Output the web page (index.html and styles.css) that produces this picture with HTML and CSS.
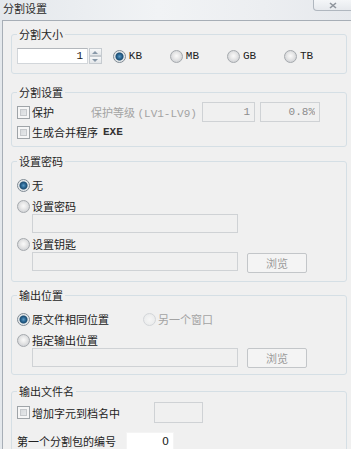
FILE: index.html
```html
<!DOCTYPE html>
<html lang="zh-CN">
<head>
    <meta charset="UTF-8">
    <meta name="viewport" content="width=device-width, initial-scale=1.0">
    <title>分割设置</title>
    <link rel="stylesheet" href="styles.css">
</head>
<body>
<div class="window">
    <div class="titlebar">
        <span class="title">分割设置</span>
        <span class="close">
            <svg width="8" height="7" viewBox="0 0 8 7"><path d="M1 1 L7 6 M7 1 L1 6" stroke="#8e949c" stroke-width="1.6" fill="none"/></svg>
        </span>
    </div>

    <div class="client">
        <!-- split size -->
        <fieldset class="group g1">
            <legend>分割大小</legend>
            <div class="row r16">
                <input type="text" class="spin-input mono" value="1">
                <span class="spin">
                    <span class="spin-btn up"></span>
                    <span class="spin-btn down"></span>
                </span>
                <label class="unit first"><input type="radio" name="unit" checked><span class="mono">KB</span></label>
                <label class="unit"><input type="radio" name="unit"><span class="mono">MB</span></label>
                <label class="unit"><input type="radio" name="unit"><span class="mono">GB</span></label>
                <label class="unit"><input type="radio" name="unit"><span class="mono">TB</span></label>
            </div>
        </fieldset>

        <!-- split options -->
        <fieldset class="group g2">
            <legend>分割设置</legend>
            <div class="row r20">
                <label class="opt protect"><input type="checkbox">保护</label>
                <span class="dim level">保护等级 <span class="mono">(LV1-LV9)</span></span>
                <input type="text" class="field mono lv" value="1" disabled>
                <input type="text" class="field mono pct" value="0.8%" disabled>
            </div>
            <div class="row r16 gap2">
                <label class="opt"><input type="checkbox">生成合并程序<span class="mono bold exe">EXE</span></label>
            </div>
        </fieldset>

        <!-- password -->
        <fieldset class="group g3">
            <legend>设置密码</legend>
            <div class="row r16">
                <label class="opt"><input type="radio" name="pw" checked>无</label>
            </div>
            <div class="row r16 gap5">
                <label class="opt"><input type="radio" name="pw">设置密码</label>
            </div>
            <div class="row indent">
                <input type="text" class="field wide" disabled>
            </div>
            <div class="row r16 gap3">
                <label class="opt"><input type="radio" name="pw">设置钥匙</label>
            </div>
            <div class="row indent top">
                <input type="text" class="field wide" disabled>
                <button class="browse low" disabled>浏览</button>
            </div>
        </fieldset>

        <!-- output location -->
        <fieldset class="group g4">
            <legend>输出位置</legend>
            <div class="row r16">
                <label class="opt same"><input type="radio" name="loc" checked>原文件相同位置</label>
                <label class="opt dim"><input type="radio" name="loc" disabled>另一个窗口</label>
            </div>
            <div class="row r16 gap5">
                <label class="opt"><input type="radio" name="loc">指定输出位置</label>
            </div>
            <div class="row indent top">
                <input type="text" class="field wide" disabled>
                <button class="browse" disabled>浏览</button>
            </div>
        </fieldset>

        <!-- output file name -->
        <fieldset class="group g5">
            <legend>输出文件名</legend>
            <div class="row r21">
                <label class="opt addchar"><input type="checkbox">增加字元到档名中</label>
                <input type="text" class="field small" disabled>
            </div>
            <div class="row gap9">
                <span class="first-label">第一个分割包的编号</span>
                <input type="text" class="num-input" value="0">
            </div>
        </fieldset>
    </div>
</div>
</body>
</html>
```

FILE: styles.css
```css
body {
    margin: 0;
    font-family: "Noto Sans CJK SC", "Microsoft YaHei", sans-serif;
    font-size: 11px;
    color: #222;
}

.window {
    width: 351px;
    height: 449px;
    overflow: hidden;
    background: linear-gradient(to right, #e4e8ec, #f1f3f5 45%, #eceef1 75%, #e6e9ed);
}

/* title bar */
.titlebar {
    height: 20px;
    display: flex;
    justify-content: space-between;
    align-items: flex-start;
}
.title {
    padding: 1px 0 0 3px;
    line-height: 14px;
    color: #2a2a2a;
}
.close {
    width: 42px;
    height: 11px;
    margin-right: -4px;
    box-sizing: border-box;
    padding: 2px 0 0 15px;
    border: 1px solid #b0b7bf;
    border-top: none;
    border-radius: 0 0 4px 4px;
    background: linear-gradient(#f4f6f8, #e6e9ed);
    display: flex;
}

/* client area */
.client {
    margin-left: 2px;
    height: 429px;
    border-top: 1px solid #a7aeb6;
    border-left: 1px solid #a7aeb6;
    background: #f0f0f0;
    overflow: hidden;
}

/* group boxes */
.group {
    margin: 0 4px 0 8px;
    padding: 0 5px;
    border: 1px solid #d5dfe5;
    border-radius: 3px;
    min-width: 0;
}
.group legend {
    padding: 0 2px;
    line-height: 14px;
    color: #262626;
}
.g1 { margin-top: 6px; padding-top: 7px; padding-bottom: 9px; }
.g2 { margin-top: 11px; padding-top: 3px; padding-bottom: 6px; }
.g3 { margin-top: 7px; padding-top: 9px; padding-bottom: 8px; }
.g4 { margin-top: 6px; padding-top: 9px; padding-bottom: 6px; }
.g5 { margin-top: 9px; padding-top: 4px; padding-bottom: 10px; }

.row {
    display: flex;
    align-items: center;
}
.row.top { align-items: flex-start; }
.r16 { height: 16px; }
.r20 { height: 20px; }
.r21 { height: 21px; }
.gap2 { margin-top: 2px; }
.gap3 { margin-top: 3px; }
.gap5 { margin-top: 5px; }
.gap9 { margin-top: 9px; }
.indent { margin-left: 15px; }

.mono {
    font-family: "Liberation Mono", "DejaVu Sans Mono", monospace;
    font-size: 11px;
}
.bold { font-weight: bold; color: #333; }
.exe { margin-left: 5px; }
.dim { color: #a3a3a3; }

label {
    display: flex;
    align-items: center;
    white-space: nowrap;
}

/* radios and checkboxes */
input[type="radio"],
input[type="checkbox"] {
    appearance: none;
    -webkit-appearance: none;
    width: 13px;
    height: 13px;
    margin: 0 2px 0 0;
    flex: none;
    box-sizing: border-box;
}
input[type="radio"] {
    border: 1px solid #a5a9ad;
    border-radius: 50%;
    background: radial-gradient(circle at 50% 45%, #fafafa 0, #e9e9e9 3px, #d3d5d8 6px);
}
input[type="radio"]:checked {
    border-color: #7f8a93;
    background: radial-gradient(circle at 50% 50%, #5c9ac4 0, #26608c 2.5px, #1d4f74 3.5px, #dfe3e6 4.5px, #f3f4f5 6px);
}
input[type="radio"]:disabled {
    border-color: #d3d6d9;
    background: radial-gradient(circle, #f6f6f6 0, #eaebec 6px);
}
input[type="checkbox"] {
    border: 1px solid #9fa4a8;
    background: #f6f6f6;
    box-shadow: inset 0 0 0 2px #f6f6f6, inset 0 0 0 3px #c5c8cb;
    background-image: linear-gradient(135deg, #cfd2d5, #eef0f1);
}

/* size row */
.spin-input {
    width: 71px;
    height: 16px;
    box-sizing: border-box;
    margin: 0;
    padding: 0 4px 0 0;
    border: 1px solid #d2d6da;
    border-top-color: #b3b7bc;
    background: #fff;
    text-align: right;
    color: #222;
}
.spin {
    width: 13px;
    height: 16px;
    margin-left: 1px;
    display: flex;
    flex-direction: column;
}
.spin-btn {
    height: 8px;
    box-sizing: border-box;
    border: 1px solid #c6cbd0;
    background: linear-gradient(#f7f8f9, #e3e6e9);
    display: flex;
    justify-content: center;
    align-items: center;
}
.spin-btn::after {
    content: "";
    border-left: 3px solid transparent;
    border-right: 3px solid transparent;
}
.spin-btn.up::after { border-bottom: 3px solid #8898a8; }
.spin-btn.down::after { border-top: 3px solid #8898a8; }
.unit { width: 58px; }
.unit.first { margin-left: 11px; }
.unit input { margin-right: 3px; }

/* text fields */
.field {
    box-sizing: border-box;
    margin: 0;
    border: 1px solid #cfd2d5;
    background: #f0f0f0;
    text-align: right;
    padding: 0 4px 0 0;
    color: #8c8c8c;
}
.protect { width: 74px; }
.level { width: 111px; }
.lv { width: 53px; height: 20px; }
.pct { width: 60px; height: 20px; margin-left: 5px; }
.wide { width: 206px; height: 19px; }
.small { width: 49px; height: 21px; }
.addchar { width: 137px; }

.browse {
    width: 60px;
    height: 20px;
    margin: 0 0 0 9px;
    padding: 0;
    box-sizing: border-box;
    border: 1px solid #c3c6c9;
    border-radius: 2px;
    background: #f4f4f4;
    font-family: "Noto Sans CJK SC", sans-serif;
    font-size: 11px;
    color: #9a9a9a;
}
.browse.low { margin-top: 1px; }

/* output location */
.same { width: 126px; }

/* output file name */
.first-label { width: 109px; }
.num-input {
    width: 48px;
    height: 18px;
    box-sizing: border-box;
    margin: 0;
    padding: 0 4px 0 0;
    border: 1px solid #f4f4f4;
    background: #fff;
    text-align: right;
    font-family: "DejaVu Sans", sans-serif;
    font-size: 11px;
    color: #222;
}
```
